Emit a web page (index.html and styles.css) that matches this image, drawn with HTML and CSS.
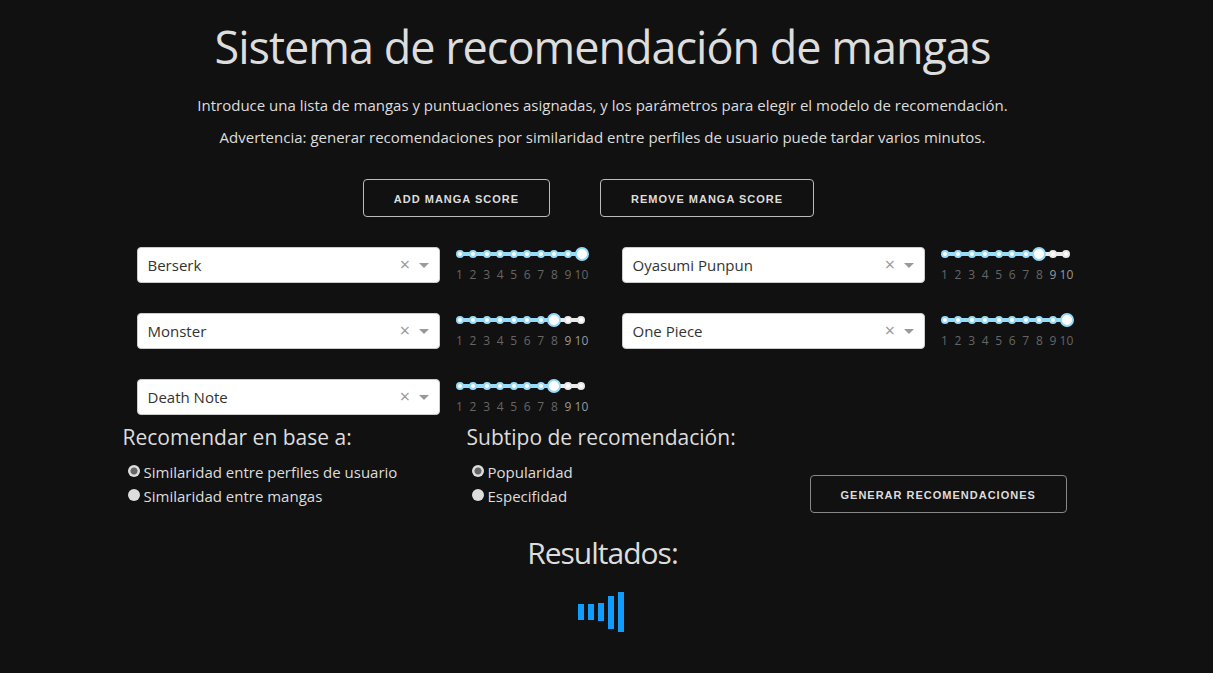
FILE: index.html
```html
<!DOCTYPE html>
<html lang="es">
<head>
<meta charset="utf-8">
<meta name="viewport" content="width=device-width, initial-scale=1">
<title>Sistema de recomendación de mangas</title>
<link rel="stylesheet" href="styles.css">
</head>
<body>
<main class="page">
  <h1 class="title">Sistema de recomendación de mangas</h1>
  <p class="intro">Introduce una lista de mangas y puntuaciones asignadas, y los parámetros para elegir el modelo de recomendación.</p>
  <p class="intro">Advertencia: generar recomendaciones por similaridad entre perfiles de usuario puede tardar varios minutos.</p>

  <div class="actions">
    <button class="button" type="button">Add manga score</button>
    <button class="button" type="button">Remove manga score</button>
  </div>

  <form class="form">
    <div class="scores" id="scores"></div>

    <div class="options">
      <fieldset class="choice">
        <legend class="subtitle">Recomendar en base a:</legend>
        <label class="option"><input class="radio" type="radio" name="base" checked>Similaridad entre perfiles de usuario</label>
        <label class="option"><input class="radio" type="radio" name="base">Similaridad entre mangas</label>
      </fieldset>
      <fieldset class="choice">
        <legend class="subtitle">Subtipo de recomendación:</legend>
        <label class="option"><input class="radio" type="radio" name="subtype" checked>Popularidad</label>
        <label class="option"><input class="radio" type="radio" name="subtype">Especifidad</label>
      </fieldset>
      <button class="button button-submit" type="button">Generar recomendaciones</button>
    </div>
  </form>

  <h2 class="results">Resultados:</h2>
  <svg class="loader" viewBox="0 0 46 40" aria-hidden="true">
    <rect x="0" y="12" width="6" height="16"/>
    <rect x="10" y="12" width="6" height="16"/>
    <rect x="20" y="11" width="6" height="18"/>
    <rect x="30" y="4" width="6" height="33"/>
    <rect x="40" y="0" width="6" height="40"/>
  </svg>
</main>
<script src="app.js"></script>
</body>
</html>
```
FILE: styles.css
```css
* { box-sizing: border-box; }
body {
  margin: 0;
  padding: 0 8px 0 0;
  background: #111;
  color: #ddd;
  font-family: "Open Sans", "Noto Sans", sans-serif;
  font-size: 15px;
  line-height: 24px;
}
.page {
  max-width: 960px;
  margin: 0 auto;
  padding-top: 20px;
  display: flex;
  flex-direction: column;
}
.title {
  margin: 0 0 19px;
  font-size: 45px;
  font-weight: 400;
  line-height: 54px;
  letter-spacing: -1px;
  text-align: center;
}
.intro { margin: 0 0 8px; text-align: center; }
.actions {
  display: flex;
  justify-content: center;
  gap: 50px;
  margin: 22px 28px 30px 0;
}
.button {
  height: 38px;
  padding: 1px 30px 0;
  border: 1px solid #bbb;
  border-radius: 4px;
  background: transparent;
  color: #ddd;
  font: 600 11px "Liberation Sans", Arial, sans-serif;
  letter-spacing: 1px;
  text-transform: uppercase;
  white-space: nowrap;
  cursor: pointer;
}
.scores {
  display: grid;
  grid-template-columns: 1fr 1fr;
  gap: 30px 33px;
  padding: 0 9px 0 14px;
}
.score { display: flex; gap: 13px; height: 36px; }
.picker { position: relative; flex: 1; display: flex; }
.select {
  flex: 1;
  appearance: none;
  padding: 0 60px 0 10px;
  border: 1px solid #ccc;
  border-radius: 4px;
  background: #fff;
  color: #333;
  font: 400 15px "Open Sans", sans-serif;
}
.clear {
  position: absolute;
  right: 26px;
  top: 8px;
  width: 17px;
  height: 18px;
  padding: 0;
  border: 0;
  background: none;
  color: #999;
  font: 18px/18px "Open Sans", sans-serif;
}
.arrow {
  position: absolute;
  right: 11px;
  top: 16px;
  width: 10px;
  height: 5px;
  fill: #999;
  pointer-events: none;
}
.slider { width: 136px; display: grid; grid-template-columns: 136px; align-content: start; }
.rail, .range { grid-column: 1; grid-row: 1; height: 14px; }
.rail {
  display: flex;
  align-items: center;
  justify-content: space-between;
  padding: 0 3px;
  background: linear-gradient(#96dbfa, #96dbfa) 7px 5px / var(--filled) 4px no-repeat,
    linear-gradient(#e9e9e9, #e9e9e9) 7px 5px / 122px 4px no-repeat;
}
.dot {
  width: 8px;
  height: 8px;
  border: 2px solid #e9e9e9;
  border-radius: 50%;
  background: #fff;
}
.dot.active { border-color: #96dbfa; }
.range {
  appearance: none;
  width: 100%;
  margin: 0;
  background: transparent;
}
.range::-webkit-slider-thumb {
  appearance: none;
  width: 14px;
  height: 14px;
  border: 2px solid #96dbfa;
  border-radius: 50%;
  background: #fff;
}
.marks {
  display: flex;
  justify-content: space-between;
  margin-top: 6px;
  padding: 0 1px;
  color: #999;
  font-size: 12px;
  line-height: 16px;
}
.mark { display: flex; justify-content: center; width: 12px; }
.mark.active { color: #666; }
.options {
  display: grid;
  grid-template-columns: 344px 343px auto;
  align-items: end;
  justify-content: start;
  margin-top: 8px;
}
.choice { margin: 0; padding: 0; border: 0; align-self: start; }
.subtitle {
  padding: 0;
  margin-bottom: 9px;
  font-size: 21px;
  line-height: 28px;
}
.option { display: flex; align-items: center; }
.radio {
  appearance: none;
  width: 12px;
  height: 12px;
  margin: 0 4px 2px 5px;
  border-radius: 50%;
  background: #ddd;
}
.radio:checked { background: radial-gradient(circle, #666 0 3px, #ddd 4px); }
.button-submit { border-color: #888; margin-bottom: -5px; }
.results {
  margin: 25px 0 19px;
  font-size: 30px;
  font-weight: 400;
  line-height: 40px;
  letter-spacing: -1px;
  text-align: center;
}
.loader { align-self: center; width: 46px; height: 40px; margin-right: 4px; fill: #119dff; }
@media (max-width: 900px) {
  .scores, .options { grid-template-columns: 1fr; }
}
```
FILE: app.js
```js
const scores = [
  ["Berserk", 10],
  ["Oyasumi Punpun", 8],
  ["Monster", 8],
  ["One Piece", 10],
  ["Death Note", 8],
];
const steps = [1, 2, 3, 4, 5, 6, 7, 8, 9, 10];

document.getElementById("scores").innerHTML = scores.map(([name, value]) => {
  const state = (n) => (n <= value ? " active" : "");
  return `
  <div class="score">
    <div class="picker">
      <select class="select" aria-label="Manga"><option>${name}</option></select>
      <button class="clear" type="button" aria-label="Quitar ${name}">×</button>
      <svg class="arrow" viewBox="0 0 10 5" aria-hidden="true"><path d="M0 0h10L5 5z"/></svg>
    </div>
    <div class="slider">
      <div class="rail" style="--filled: ${Math.round((value - 1) * 122 / 9)}px">${steps.map((n) => `<span class="dot${state(n)}"></span>`).join("")}</div>
      <input class="range" type="range" min="1" max="10" value="${value}" aria-label="Puntuación de ${name}">
      <div class="marks">${steps.map((n) => `<span class="mark${state(n)}">${n}</span>`).join("")}</div>
    </div>
  </div>`;
}).join("");
```
